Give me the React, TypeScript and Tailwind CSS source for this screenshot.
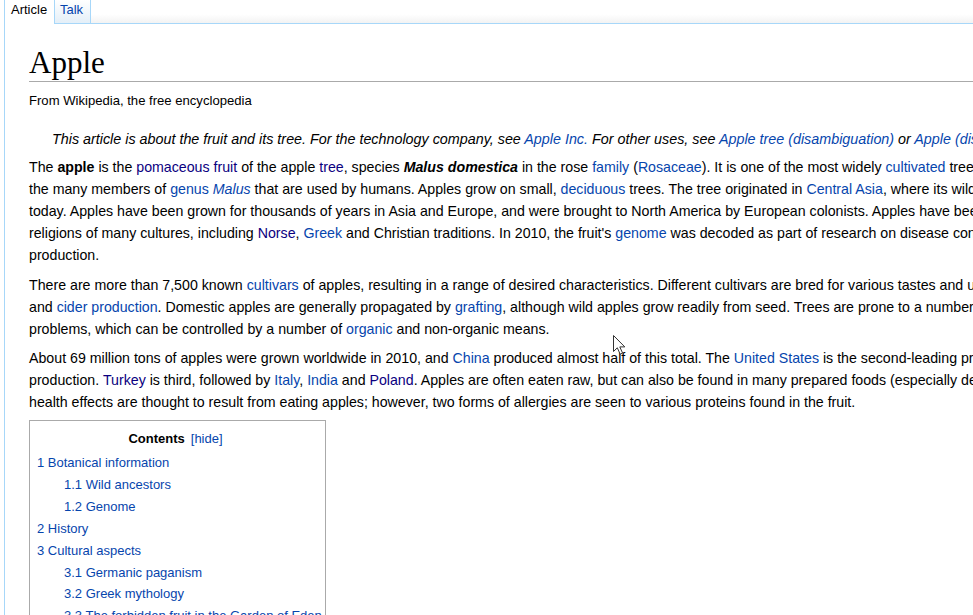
import React from 'react';

const A = ({ children, v }: { children: React.ReactNode; v?: boolean }) => (
  <a className={v ? 'text-[#0b0080]' : 'text-[#0645ad]'}>{children}</a>
);

const Line = ({ children }: { children: React.ReactNode }) => (
  <div className="whitespace-nowrap">{children}</div>
);

const TOC = [
  { n: '1', t: 'Botanical information', sub: false },
  { n: '1.1', t: 'Wild ancestors', sub: true },
  { n: '1.2', t: 'Genome', sub: true },
  { n: '2', t: 'History', sub: false },
  { n: '3', t: 'Cultural aspects', sub: false },
  { n: '3.1', t: 'Germanic paganism', sub: true },
  { n: '3.2', t: 'Greek mythology', sub: true },
  { n: '3.3', t: 'The forbidden fruit in the Garden of Eden', sub: true },
  { n: '4', t: 'Cultivars', sub: false },
];

const Cursor = () => (
  <svg className="absolute left-[613px] top-[335px]" width="13" height="20" viewBox="0 0 13 20">
    <path
      d="M0.5 0.5 L0.5 16.5 L4.3 12.8 L7.2 19.2 L9.6 18.1 L6.8 11.9 L11.8 11.9 Z"
      fill="#fff"
      stroke="#333"
      strokeWidth="1"
      strokeLinejoin="miter"
    />
  </svg>
);

export default function App() {
  return (
    <div className="relative w-[973px] h-[615px] overflow-hidden bg-white font-['Liberation_Sans',Arial,sans-serif] text-black">
      {/* tabs */}
      <div className="flex h-[24px] bg-linear-to-b from-white from-60% to-[#f1f1f1]">
        <div className="w-[4px] bg-white" />
        <div className="flex items-start pt-[2px] pl-[6px] pr-[6px] w-[50px] bg-white border-l border-[#a7d7f9] text-[13px] leading-[16px]">
          Article
        </div>
        <div className="flex items-start pt-[2px] px-[5px] w-[37px] border-l border-r border-b border-[#a7d7f9] bg-linear-to-b from-white to-[#e4eff8] text-[13px] leading-[16px] text-[#0645ad]">
          Talk
        </div>
        <div className="flex-1 border-b border-[#a7d7f9]" />
      </div>

      {/* content */}
      <div className="ml-[4px] w-[1300px] h-[600px] border-l border-[#a7d7f9] bg-white pl-[24px]">
        <h1 className="pt-[20px] font-['Liberation_Serif','Times_New_Roman',serif] text-[31px] leading-[37px] border-b border-[#aaaaaa]">
          Apple
        </h1>
        <div className="mt-[8px] text-[13.1px] leading-[21px]">From Wikipedia, the free encyclopedia</div>

        <div className="mt-[17px] pl-[23px] italic text-[14.33px] leading-[22px] whitespace-nowrap">
          This article is about the fruit and its tree. For the technology company, see <A>Apple Inc.</A> For other
          uses, see <A>Apple tree (disambiguation)</A> or <A>Apple (disambiguation)</A>.
        </div>

        <div className="mt-[6px] text-[14.2px] leading-[22px]">
          <Line>
            The <b>apple</b> is the <A v>pomaceous fruit</A> of the apple <A v>tree</A>, species{' '}
            <b>
              <i>Malus domestica</i>
            </b>{' '}
            in the rose <A>family</A> (<A>Rosaceae</A>). It is one of the most widely <A>cultivated</A> tree fruits,
            and the most widely known of
          </Line>
          <Line>
            the many members of <A>genus</A>{' '}
            <A>
              <i>Malus</i>
            </A>{' '}
            that are used by humans. Apples grow on small, <A>deciduous</A> trees. The tree originated in{' '}
            <A>Central Asia</A>, where its wild ancestor, <i>Malus sieversii</i>, is still found
          </Line>
          <Line>
            today. Apples have been grown for thousands of years in Asia and Europe, and were brought to North America
            by European colonists. Apples have been present in the mythology and
          </Line>
          <Line>
            religions of many cultures, including <A v>Norse</A>, <A>Greek</A> and Christian traditions. In 2010, the
            fruit's <A>genome</A> was decoded as part of research on disease control and selective breeding in apple
          </Line>
          <Line>production.</Line>
        </div>

        <div className="mt-[8px] text-[14.2px] leading-[22px]">
          <Line>
            There are more than 7,500 known <A>cultivars</A> of apples, resulting in a range of desired
            characteristics. Different cultivars are bred for various tastes and uses, including cooking, fresh eating
          </Line>
          <Line>
            and <A>cider production</A>. Domestic apples are generally propagated by <A>grafting</A>, although wild
            apples grow readily from seed. Trees are prone to a number of fungal, bacterial and pest
          </Line>
          <Line>
            problems, which can be controlled by a number of <A>organic</A> and non-organic means.
          </Line>
        </div>

        <div className="mt-[7px] text-[14.2px] leading-[22px]">
          <Line>
            About 69 million tons of apples were grown worldwide in 2010, and <A>China</A> produced almost half of
            this total. The <A>United States</A> is the second-leading producer, with more than 6% of world
          </Line>
          <Line>
            production. <A v>Turkey</A> is third, followed by <A>Italy</A>, <A>India</A> and <A v>Poland</A>. Apples
            are often eaten raw, but can also be found in many prepared foods (especially desserts) and drinks. Many
            beneficial
          </Line>
          <Line>
            health effects are thought to result from eating apples; however, two forms of allergies are seen to
            various proteins found in the fruit.
          </Line>
        </div>

        <div className="mt-[7px] w-[297px] border border-[#aaaaaa] bg-white pt-[7px] pl-[7px] pb-[6px]">
          <div className="text-center text-[13px] leading-[22px] pr-[11px]">
            <b>Contents</b>
            <span className="ml-[6px] text-[#0645ad]">
              [<A>hide</A>]
            </span>
          </div>
          <ul className="mt-[2px] text-[13px] leading-[21.9px] text-[#0645ad]">
            {TOC.map((item) => (
              <li key={item.n} className={item.sub ? 'pl-[27px] whitespace-nowrap' : 'whitespace-nowrap'}>
                {item.n} {item.t}
              </li>
            ))}
          </ul>
        </div>
      </div>

      <Cursor />
    </div>
  );
}
